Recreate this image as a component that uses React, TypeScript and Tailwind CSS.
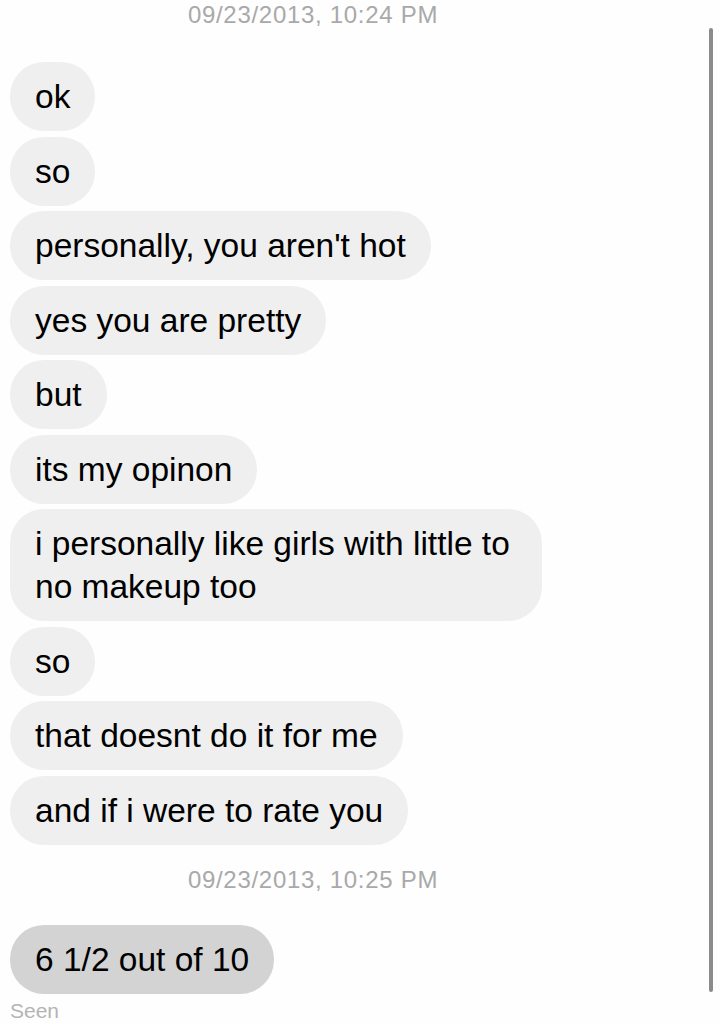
import React from 'react';

const messages: string[] = [
  'ok',
  'so',
  "personally, you aren't hot",
  'yes you are pretty',
  'but',
  'its my opinon',
  'i personally like girls with little to no makeup too',
  'so',
  'that doesnt do it for me',
  'and if i were to rate you',
];

function Bubble({ text, dark = false }: { text: string; dark?: boolean }) {
  return (
    <div
      className={`self-start max-w-[532px] rounded-[34px] px-[25px] py-[13px] text-[33.5px] leading-[43px] text-black ${
        dark ? 'bg-[#d3d3d3]' : 'bg-[#efefef]'
      }`}
    >
      {text}
    </div>
  );
}

function Stamp({ children }: { children: React.ReactNode }) {
  return (
    <div className="-ml-[10px] w-[626px] text-center text-[24px] leading-[24px] tracking-[0.7px] text-[#a9a9a9]">
      {children}
    </div>
  );
}

export default function App() {
  return (
    <div
      className="relative h-[1024px] w-[720px] overflow-hidden bg-[#fefefe]"
      style={{ fontFamily: '"Liberation Sans", Arial, sans-serif' }}
    >
      <div className="flex flex-col pl-[10px] pt-[3px]">
        <Stamp>09/23/2013, 10:24 PM</Stamp>

        <div className="mt-[35px] flex flex-col gap-[5.5px]">
          {messages.map((m, i) => (
            <Bubble key={i} text={m} />
          ))}
        </div>

        <div className="mt-[23px]">
          <Stamp>09/23/2013, 10:25 PM</Stamp>
        </div>

        <div className="mt-[33px] flex flex-col">
          <Bubble text="6 1/2 out of 10" dark />
        </div>

        <div className="mt-[6px] text-[21px] leading-[21px] text-[#b4b4b4]">Seen</div>
      </div>

      {/* scroll indicator */}
      <div className="absolute left-[709px] top-[28px] h-[964px] w-[4px] rounded-full bg-[#8b8b8b]" />
    </div>
  );
}
